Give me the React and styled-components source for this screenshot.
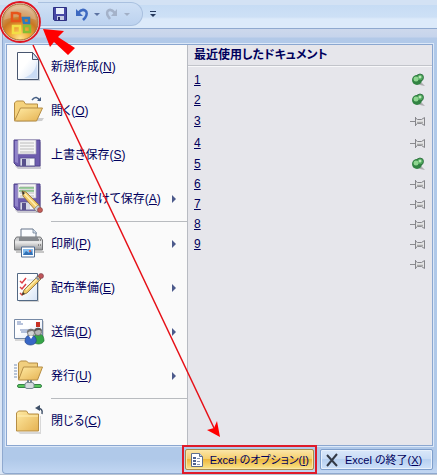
import React from 'react';
import styled, { createGlobalStyle } from 'styled-components';

const commands = [
    { id: 'new', label: '新規作成', accel: 'N' },
    { id: 'open', label: '開く', accel: 'O' },
    { id: 'save', label: '上書き保存', accel: 'S' },
    { id: 'saveAs', label: '名前を付けて保存', accel: 'A', more: true, lineAfter: true },
    { id: 'print', label: '印刷', accel: 'P', more: true },
    { id: 'prepare', label: '配布準備', accel: 'E', more: true },
    { id: 'send', label: '送信', accel: 'D', more: true },
    { id: 'publish', label: '発行', accel: 'U', more: true, lineAfter: true },
    { id: 'close', label: '閉じる', accel: 'C' },
];

const documents = [
    { id: 1, pinned: true },
    { id: 2, pinned: true },
    { id: 3, tall: true },
    { id: 4, tall: true },
    { id: 5, pinned: true },
    { id: 6 },
    { id: 7 },
    { id: 8 },
    { id: 9 },
    { id: 10, blank: true },
];

// shared drawings
const Floppy = () => (
    <g>
        <path d="M2 3h26v27H5l-3-3z" fill="#aaa8b8" opacity=".6" />
        <path d="M1 1h26v26H4l-3-3z" fill="#6d5cae" stroke="#50438c" />
        <path d="M2 2h3v22l-3-1z" fill="#9184ca" />
        <path d="M5 1h18v14H5z" fill="#f5f5f5" stroke="#aaa6bb" strokeWidth=".7" />
        <path d="M7 4h14M7 7h14M7 10h14M7 13h14" stroke="#bcbcbc" />
        <path d="M7 19h15v8H7z" fill="#d8dbe7" stroke="#51478a" strokeWidth=".7" />
        <path d="M9 20h4v7H9z" fill="#57518c" />
        <path d="M17 20h4v6h-4z" fill="#f7f7fb" />
    </g>
);

const Pencil = () => (
    <g>
        <path d="M9 8l4 1 14 14-4 5L10 13z" fill="#f2ca6a" stroke="#8d6b32" strokeWidth=".8" />
        <path d="M11 10l14 15" stroke="#fff0b2" strokeWidth="1.5" />
        <path d="M9 8l1 4 2-2z" fill="#333" />
        <path d="M25 22l3 3-4 4-3-3z" fill="#c8ccd3" stroke="#777" strokeWidth=".6" />
        <circle cx="27" cy="27" r="2.5" fill="#c45e58" stroke="#833e3e" strokeWidth=".6" />
    </g>
);

const drawings = {
    new: <g>
        <path d="M6 3h15l6 7v20H6z" fill="#aab1c0" opacity=".5" />
        <path d="M4.500 1.500h15l6 7v20h-21z" fill="url(#paper)" stroke="#48566f" />
        <path d="M24 10v17H11c8-3 12-8 13-17" fill="#cadcf5" />
        <path d="M19.500 1.500v7h6z" fill="#dce8f8" stroke="#48566f" />
    </g>,
    open: <g>
        <path d="M3 27l26-1 2-3H7z" fill="#9a9a9a" opacity=".45" />
        <path d="M1.500 25V8l2-2h7l2 3h12v4" fill="#f5d27c" stroke="#b58d44" />
        <path d="M1.500 26l6-13h22l-6 13z" fill="url(#folder)" stroke="#b58d44" />
        <path d="M19 5c3-4 6-3 8 1" fill="none" stroke="#465f84" strokeWidth="1.500" />
        <path d="M24 6h4V2z" fill="#465f84" />
    </g>,
    save: <Floppy />,
    saveAs: <g>
        <Floppy />
        <path d="M6 5h15M6 8h15" stroke="#49a64d" strokeWidth="1.200" />
        <Pencil />
    </g>,
    print: <g>
        <path d="M3 23h28v2H3z" fill="#777" opacity=".4" />
        <path d="M8 11V1h12l3 3v7" fill="#fafcff" stroke="#66758a" />
        <path d="M20 1v4h4" fill="#d1ddec" stroke="#66758a" strokeWidth=".7" />
        <path d="M3.500 9h24l2 3v10h-28V12z" fill="url(#steel)" stroke="#747679" />
        <path d="M6 9h19v4H6z" fill="#85898e" />
        <path d="M2 14h27" stroke="#f4f4f4" />
        <path d="M25 12h1M27 12h1M25 17h1M27 17h1" stroke="#444" />
        <path d="M8.500 19h13v10h-13z" fill="#fff" stroke="#526d92" />
        <path d="M10 21h10v6H10z" fill="#86bff0" />
        <path d="M10 27l3-4 3 2 2-3 2 5z" fill="#3271b7" />
        <circle cx="17" cy="23" r="1" fill="#e8563e" />
    </g>,
    prepare: <g>
        <path d="M6 3h20v27H6z" fill="#aaa" opacity=".5" />
        <path d="M4.500 1.500h20v27h-20z" fill="url(#paper)" stroke="#536984" />
        <path d="M7 9l2 2 4-5M7 15l2 2 4-5M7 21l2 2 4-5" fill="none" stroke="#dc4146" strokeWidth="1.500" />
        <path d="M14 8h8M14 14h6" stroke="#cbd6e7" />
        <path d="M9 23l2-5L25 4l3 3-14 14z" fill="#f1cb68" stroke="#826533" strokeWidth=".8" />
        <path d="M13 18L26 5" stroke="#fff0ac" strokeWidth="1.500" />
        <path d="M9 23l1-3 2 2z" fill="#333" />
        <path d="M23 5l3 3" stroke="#87909d" strokeWidth="2" />
        <circle cx="28" cy="4" r="2.500" fill="#bf5559" stroke="#763e48" strokeWidth=".6" />
    </g>,
    send: <g>
        <path d="M2 5h29v20H2z" fill="#aaa" opacity=".45" />
        <path d="M1.500 3.500h28v19h-28z" fill="url(#paper)" stroke="#7689a5" />
        <path d="M4 6h4M4 8h6M7 14h10M8 16h6" stroke="#7188b8" />
        <path d="M23 6h4v5h-4z" fill="#c93326" />
        <path d="M20 25c0-6 3-7 6-7 4 0 5 4 5 7-2 4-9 4-11 0" fill="#35a547" stroke="#207431" strokeWidth=".7" />
        <circle cx="25" cy="16" r="3.500" fill="#b7b7b7" stroke="#555" strokeWidth=".7" />
        <path d="M21 16c-1-5 8-6 8-1-3-2-5-1-8 1" fill="#555" />
        <path d="M12 26c0-6 3-7 6-7 4 0 6 4 5 7-2 4-9 4-11 0" fill="#3867c6" stroke="#254587" strokeWidth=".7" />
        <circle cx="18" cy="17" r="3.500" fill="#d5d5d5" stroke="#555" strokeWidth=".7" />
        <path d="M14 17c-1-5 8-6 8-1-3-2-5-1-8 1" fill="#777" />
        <path d="M16 20l2 3 2-3" fill="#fff" />
    </g>,
    publish: <g>
        <path d="M1 5h3M1 8h3M1 11h3M1 14h3M1 17h3" stroke="#7991b6" />
        <path d="M5.500 19V3l2-2h6l2 2h9v4" fill="#f1cf7e" stroke="#b58d44" />
        <path d="M5.500 20l5-13h19l-5 13z" fill="url(#folder)" stroke="#b58d44" />
        <path d="M15 20v5M18 20v5" stroke="#73838d" strokeWidth="2" />
        <rect x="4.500" y="24.500" width="24" height="3" rx="1.500" fill="#57c65a" stroke="#368148" />
        <rect x="12" y="22.500" width="9" height="6" rx="2" fill="#d4dade" stroke="#788a93" />
    </g>,
    close: <g>
        <path d="M5 27h22V11h1v18H7z" fill="#999" opacity=".35" />
        <path d="M3.500 26V8l2-2h8l2 3h10v17z" fill="url(#folder)" stroke="#b58d44" />
        <path d="M4 11h21" stroke="#fff0b5" />
        <path d="M29 9c1-4-1-6-5-6" fill="none" stroke="#3f5068" strokeWidth="1.500" />
        <path d="M27 0v6l-5-3z" fill="#3f5068" />
    </g>,
};

function Gradients() {
    return <Hidden aria-hidden="true">
        <defs>
            <linearGradient id="paper" x2="1" y2="1"><stop offset=".4" stopColor="#fff" /><stop offset="1" stopColor="#d6e3f5" /></linearGradient>
            <linearGradient id="folder" x2="1" y2="1"><stop stopColor="#ffeaa3" /><stop offset="1" stopColor="#e5b252" /></linearGradient>
            <linearGradient id="steel" x2="0" y2="1"><stop stopColor="#c2c4c6" /><stop offset=".5" stopColor="#ddd" /><stop offset="1" stopColor="#929496" /></linearGradient>
            <radialGradient id="orb" cx=".5" cy=".95" r=".95"><stop stopColor="#ffe38b" /><stop offset=".3" stopColor="#f0a838" /><stop offset=".55" stopColor="#c97722" /><stop offset=".8" stopColor="#cf9a62" /><stop offset="1" stopColor="#e6c8a2" /></radialGradient>
        </defs>
    </Hidden>;
}

function OfficeLogo() {
    return <svg width="42" height="44" viewBox="0 0 42 44" aria-hidden="true">
        <circle cx="20" cy="22" r="20" fill="#ead9cd" stroke="#e01421" strokeWidth="1.800" />
        <circle cx="20" cy="22" r="18" fill="url(#orb)" stroke="#a8703c" />
        <path d="M4 20C6 2 34 2 36 20c-10-4-22-4-32 0" fill="#fff" opacity=".2" />
        <g fill="none" strokeWidth="2.500">
            <path d="M17 13h-5v8h8v-7z" stroke="#e8541a" />
            <path d="M23 18h6v5h-5z" stroke="#2e79bd" />
            <path d="M13 26h7v7h-7z" stroke="#f3df45" />
            <path d="M24 26h6v6h-6z" stroke="#86bd34" />
        </g>
    </svg>;
}

function Pin({ pinned }) {
    if (pinned) {
        return <svg width="16" height="16" viewBox="0 0 16 16" aria-hidden="true">
            <path d="M6 11l5-1 4 4-5-1z" fill="#888" opacity=".6" />
            <circle cx="7" cy="8" r="5" fill="#328443" />
            <circle cx="10" cy="5.500" r="3.500" fill="#4ca65a" stroke="#28673a" strokeWidth=".8" />
            <circle cx="6" cy="7" r="2.500" fill="#8fd690" />
            <circle cx="10" cy="5" r="1.500" fill="#b7e7b5" />
        </svg>;
    }
    return <svg width="16" height="16" viewBox="0 0 16 16" aria-hidden="true">
        <path d="M0 8.500h5" stroke="#8c8c90" />
        <path d="M5.500 4v9M5.500 5l2 1.500h4l3-2v8l-3-2h-4L5.500 12" fill="#e5e5e6" stroke="#85858a" />
        <path d="M7 9.500h6" stroke="#aaa" strokeWidth="1.500" />
    </svg>;
}

function App() {
    return <Page>
        <GlobalStyle />
        <Gradients />
        <QuickAccess>
            <Tray>
                <ToolButton aria-label="上書き保存">
                    <svg width="14" height="14" viewBox="0 0 14 14">
                        <path d="M.5.5h13v13h-12l-1-1z" fill="#4748a5" stroke="#2d3082" />
                        <path d="M3 1h8v6H3z" fill="#e9effb" />
                        <path d="M4 9h7v4H4z" fill="#c5cce4" /><path d="M5 10h2v3H5z" fill="#282c68" />
                    </svg>
                </ToolButton>
                <ToolButton aria-label="元に戻す">
                    <svg width="14" height="14" viewBox="0 0 14 14">
                        <path d="M3 6c5-6 12-2 7 5l-2 2" fill="none" stroke="#3d69c0" strokeWidth="2.500" />
                        <path d="M1 2v7h7z" fill="#3d69c0" />
                    </svg>
                </ToolButton>
                <Caret />
                <ToolButton aria-label="やり直し">
                    <svg width="14" height="14" viewBox="0 0 14 14">
                        <path d="M10 6C5 0 0 4 3 9l2 3" fill="none" stroke="#a4b2c9" strokeWidth="2.500" />
                        <path d="M12 2v7H6z" fill="#a4b2c9" />
                    </svg>
                </ToolButton>
                <Caret $dim />
            </Tray>
            <ToolButton aria-label="ツールバーのカスタマイズ">
                <svg width="8" height="8" viewBox="0 0 8 8"><path d="M1 1.500h6" stroke="#26395c" /><path d="M1 4h6L4 7z" fill="#26395c" /></svg>
            </ToolButton>
        </QuickAccess>
        <OfficeButton aria-label="Office ボタン"><OfficeLogo /></OfficeButton>

        <Frame>
            <Panes>
                <Commands>
                    {commands.map(cmd => <React.Fragment key={cmd.id}>
                        <Command>
                            <svg width="32" height="32" viewBox="0 0 32 32" aria-hidden="true">{drawings[cmd.id]}</svg>
                            <Label>{cmd.label}(<u>{cmd.accel}</u>)</Label>
                            {cmd.more && <More width="4" height="8" viewBox="0 0 4 8" aria-hidden="true"><path d="M0 0l4 4-4 4z" /></More>}
                        </Command>
                        {cmd.lineAfter && <Line />}
                    </React.Fragment>)}
                </Commands>
                <Recent>
                    <Heading>最近使用したドキュメント</Heading>
                    <List>
                        {documents.map(doc => <Doc key={doc.id} $tall={doc.tall}>
                            <DocLink href="#">{doc.blank ? '' : doc.id}</DocLink>
                            <PinButton aria-label="一覧に固定"><Pin pinned={doc.pinned} /></PinButton>
                        </Doc>)}
                    </List>
                </Recent>
            </Panes>
            <Footer>
                <Marked>
                    <FooterButton $hot>
                        <svg width="14" height="16" viewBox="0 0 14 16" aria-hidden="true">
                            <path d="M1.500 1.500h8l3 3v10h-11z" fill="#fff" stroke="#5d6e8c" />
                            <path d="M9.500 1.500v3h3" fill="#c7d5eb" stroke="#5d6e8c" />
                            <path d="M3 5h3v2H3zM3 8h3v2H3zM3 11h3v2H3z" fill="#4f6390" />
                            <path d="M7 6.500h3M7 9.500h3M7 12.500h3" stroke="#8594b2" />
                        </svg>
                        <Label>Excel のオプション(<u>I</u>)</Label>
                    </FooterButton>
                </Marked>
                <FooterButton>
                    <svg width="14" height="14" viewBox="0 0 14 14" aria-hidden="true">
                        <path d="M2 2l10 11M12 1L2 13" stroke="#343b48" strokeWidth="2" />
                    </svg>
                    <Label>Excel の終了(<u>X</u>)</Label>
                </FooterButton>
            </Footer>
        </Frame>
        <Sheet />

        <Arrows width="437" height="475" viewBox="0 0 437 475" aria-hidden="true">
            <path d="M33 45L214 428" stroke="#e60f16" strokeWidth="1.500" />
            <path d="M220 437l-13-7 7-2 3-7z" fill="#f00" />
            <path d="M43 29l21 2-6 6 17 11-7 7-14-13-4 5z" fill="#f00" />
        </Arrows>
    </Page>;
}

export default App;

const GlobalStyle = createGlobalStyle`
* { box-sizing: border-box; }
body {
    margin: 0;
    background: #dbe6f5;
    font-family: "Liberation Sans", "Noto Sans CJK JP", sans-serif;
    font-size: 12px;
    line-height: 16px;
    color: #00005c;
}
button {
    font: inherit;
    color: inherit;
    border: none;
    background: none;
    padding: 0;
}`

const Page = styled.div`
position: relative;
overflow: hidden;`

const Hidden = styled.svg`
position: absolute;
width: 0;
height: 0;`

const QuickAccess = styled.div`
display: flex;
align-items: center;
height: 28px;
padding-left: 38px;
background: linear-gradient(#d3e2f4 5px, #c6dcf4 5px, #cde0f6 17px, #dceafa 19px, #dceafa);`

const Tray = styled.div`
display: flex;
align-items: center;
gap: 2px;
height: 24px;
padding: 0 12px;
border: 1px solid #a9c0df;
border-left: none;
border-radius: 0 12px 12px 0;
background: linear-gradient(#cfe0f5, #bcd2ef);`

const ToolButton = styled.button`
display: flex;
align-items: center;
justify-content: center;
min-width: 20px;
height: 20px;`

const Caret = styled.i`
width: 6px;
border: 3px solid transparent;
border-top-color: ${props => props.$dim ? "#a1afc6" : "#5c73a1"};
border-bottom: none;`

const OfficeButton = styled.button`
position: absolute;
top: 0;
left: 0;
z-index: 2;`

const Frame = styled.div`
margin: 0 0 0 2px;
padding: 15px 4px 0 3px;
border: 1px solid #8fa9cf;
border-right: none;
border-radius: 4px 0 0 4px;
background: linear-gradient(#cdd8ec, #c6d4ec 8px, #b3c9e8 9px, #b0c9e9 16px, #b0c9e9 430px, #c1d6f2);`

const Panes = styled.div`
display: flex;
border: 1px solid #8ba7d0;
outline: 1px solid #dce8f8;`

const Commands = styled.div`
flex: 0 0 181px;
padding-bottom: 2px;
background: #fafafa;
border-right: 1px solid #b8bbc2;`

const Command = styled.button`
display: flex;
align-items: center;
width: 100%;
height: 44px;
padding: 0 11px 0 6px;
gap: 6px;
text-align: left;`

const Label = styled.span`
white-space: nowrap;
font-feature-settings: "palt";`

const More = styled.svg`
margin-left: auto;
fill: #4c5a8b;`

const Line = styled.hr`
height: 1px;
margin: 0 0 0 44px;
border: none;
background: #b8bbbf;`

const Recent = styled.div`
flex: 1;
min-width: 0;
background: #e6e6eb;`

const Heading = styled.h2`
margin: 0;
padding: 2px 6px;
font-size: 12px;
line-height: 16px;
font-feature-settings: "palt";
border-bottom: 1px solid #c2c4ca;
box-shadow: 0 1px #f8f8fa;`

const List = styled.ul`
list-style: none;
margin: 0;
padding: 4px 6px;`

const Doc = styled.li`
display: flex;
align-items: center;
justify-content: space-between;
height: ${props => props.$tall ? 22 : 20}px;`

const DocLink = styled.a`
color: inherit;`

const PinButton = styled.button`
display: flex;`

const Footer = styled.div`
display: flex;
align-items: center;
justify-content: flex-end;
gap: 3px;
margin: -1px 0;`

const Marked = styled.div`
position: relative;
padding: 2px 1px;
border: 2px solid #df1b2a;`

const FooterButton = styled.button`
display: flex;
align-items: center;
gap: 6px;
min-width: ${props => props.$hot ? 127 : 113}px;
height: 21px;
padding: 0 4px;
font-size: 11px;
border: 1px solid ${props => props.$hot ? "#a98a49" : "#7f9fcc"};
border-radius: 2px;
box-shadow: inset 0 0 0 1px ${props => props.$hot ? "#fbe7a4" : "#e8f1fc"};
background: ${props => props.$hot
        ? "linear-gradient(#fbe5a9, #f5d06e 45%, #eeb83e 50%, #fae58c)"
        : "linear-gradient(#dae8fa, #c9dcf5 45%, #b7d0f0 50%, #cfe2fa)"};`

const Sheet = styled.div`
height: 2px;
background: #b9c4d3;`

const Arrows = styled.svg`
position: absolute;
top: 0;
left: 0;
z-index: 3;
pointer-events: none;`
